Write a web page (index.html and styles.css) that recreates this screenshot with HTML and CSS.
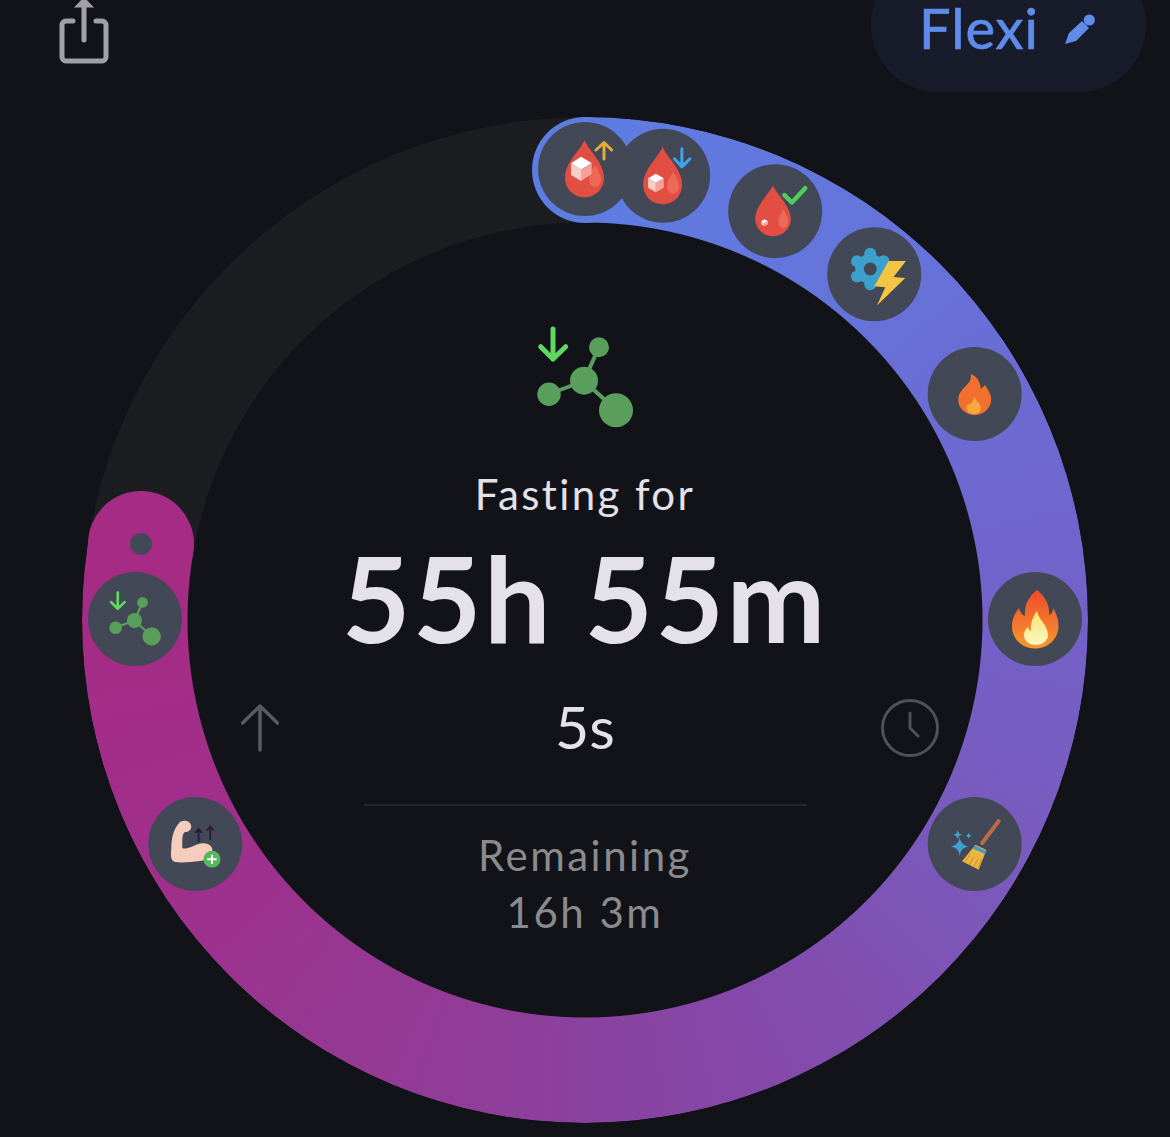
FILE: index.html
```html
<!DOCTYPE html>
<html lang="en">
<head>
    <meta charset="UTF-8">
    <meta name="viewport" content="width=device-width, initial-scale=1.0">
    <title>Fasting timer</title>
    <link rel="stylesheet" href="styles.css">
</head>
<body>
    <svg class="sprites" aria-hidden="true">
        <symbol id="molecule" viewBox="0 0 100 104">
            <path class="mol-bond" d="M81 84 L49 55 L64 21 M49 55 L14 68"/>
            <circle class="mol-node" cx="81" cy="84.3" r="17"/>
            <circle class="mol-node" cx="49" cy="54.7" r="14"/>
            <circle class="mol-node" cx="64" cy="21.3" r="10"/>
            <circle class="mol-node" cx="14" cy="68.3" r="11.7"/>
            <path class="mol-arrow" d="M18 3 V33 M5.7 20.7 L18 33 L30.7 20.7"/>
        </symbol>
        <symbol id="drop" viewBox="0 0 94 94">
            <path class="drop-body" d="M46.5 18 C50 28 66 40 66 56 A19.5 19.5 0 0 1 27 56 C27 40 43 28 46.5 18Z"/>
            <path class="drop-shine" d="M57 43 C59 47 63 52 63 57 C63 62 60 65 57 65 C54 65 51 62 51 57 C51 52 55 47 57 43Z"/>
        </symbol>
    </svg>

    <header class="topbar">
        <button class="share" aria-label="Share">
            <svg class="share-icon" viewBox="0 0 52 64">
                <path class="share-box" d="M15 21 H8 a4 4 0 0 0-4 4 V57 a4 4 0 0 0 4 4 H44 a4 4 0 0 0 4-4 V25 a4 4 0 0 0-4-4 H38"/>
                <path class="share-box" d="M26 40 V4"/>
                <path class="share-head" d="M16 7.5 L26 -3 L36 7.5Z"/>
            </svg>
        </button>
        <div class="plan">
            <span class="plan-name">Flexi</span>
            <svg class="pencil" viewBox="0 0 32 32">
                <path d="M1 30 L5 19 L18 7 L25 14 L12 27Z"/>
                <circle cx="25.3" cy="6" r="5.6"/>
            </svg>
        </div>
    </header>

    <main class="ring">
        <div class="band band-track"></div>
        <div class="band band-progress"></div>
        <div class="cap cap-start"></div>
        <div class="cap cap-end"></div>

        <div class="badge badge-a0">
            <svg viewBox="0 0 94 94">
                <use href="#drop"/>
                <path class="cube-top" d="M43 34.7 L53.7 41 L43 47.7 L33 41.3Z"/>
                <path class="cube-left" d="M33 41.3 L43 47.7 V59 L33 53Z"/>
                <path class="cube-right" d="M53.7 41 L43 47.7 V59 L53.7 52Z"/>
                <path class="stroke-amber" d="M66 21 V37 M58 28 L66 20.5 L73.7 28"/>
            </svg>
        </div>
        <div class="badge badge-a10">
            <svg viewBox="0 0 94 94">
                <use href="#drop"/>
                <path class="cube-top" d="M39.7 45 L47.7 49.5 L39.7 54 L32 49.5Z"/>
                <path class="cube-left" d="M32 49.5 L39.7 54 V63.5 L32 59Z"/>
                <path class="cube-right" d="M47.7 49.5 L39.7 54 V63.5 L47.7 59Z"/>
                <path class="stroke-blue" d="M65.7 20 V38 M58.3 30 L65.7 38 L73.7 30"/>
            </svg>
        </div>
        <div class="badge badge-a25">
            <svg viewBox="0 0 94 94">
                <path class="drop-body" d="M44.7 21 C48 30 62.7 41 62.7 55.5 A17.9 17.9 0 0 1 27 55.5 C27 41 41 30 44.7 21Z"/>
                <path class="drop-shine" d="M55 45 C57 49 60 53 60 57 C60 61 58 64 55 64 C52 64 50 61 50 57 C50 53 53 49 55 45Z"/>
                <path class="cube-top" d="M36.3 55 L39.8 57 L36.3 59 L33 57Z"/>
                <path class="cube-left" d="M33 57 L36.3 59 V62 L33 60Z"/>
                <path class="cube-right" d="M39.8 57 L36.3 59 V62 L39.8 60Z"/>
                <path class="stroke-check" d="M56.3 31 L63.7 38.3 L77 24"/>
            </svg>
        </div>
        <div class="badge badge-a40">
            <svg viewBox="0 0 94 94">
                <g class="gear">
                    <circle cx="43" cy="41.7" r="15"/>
                    <circle cx="43" cy="26.5" r="6"/>
                    <circle cx="56.2" cy="34" r="6"/>
                    <circle cx="56.2" cy="49.3" r="6"/>
                    <circle cx="43" cy="57" r="6"/>
                    <circle cx="29.8" cy="49.3" r="6"/>
                    <circle cx="29.8" cy="34" r="6"/>
                </g>
                <circle class="gear-hole" cx="43" cy="41.7" r="6.5"/>
                <path class="bolt" d="M61.3 33.7 H78.7 L66.3 49.7 L78 50.7 L49.7 78.3 L58 60 L47 59Z"/>
            </svg>
        </div>
        <div class="badge badge-a60">
            <svg viewBox="0 0 94 94">
                <path class="flame-small" d="M43 27 C49 29 53 35 53 42 C55 41 56 39 57 38 C61 43 63.5 48 63.5 52 C63.5 61 56 68 47 68 C38 68 30.5 61 30.5 53 C30.5 46 35 42 39 38 C42 35 44 32 43 27Z"/>
                <path class="flame-small-core" d="M47 50 C48 54 53 56 53 61 C53 65 50 67 46 67 C42 67 39 65 39 61 C39 58 41 56 43 57 C44 55 46 53 47 50Z"/>
            </svg>
        </div>
        <div class="badge badge-a90">
            <svg viewBox="0 0 94 94">
                <defs>
                    <linearGradient id="flameOuter" x1="0" y1="0" x2="0" y2="1">
                        <stop offset="0" stop-color="#ee4a2c"/>
                        <stop offset="1" stop-color="#f79a2e"/>
                    </linearGradient>
                    <linearGradient id="flameInner" x1="0" y1="0" x2="0" y2="1">
                        <stop offset="0" stop-color="#fbe46f"/>
                        <stop offset="1" stop-color="#fff6c4"/>
                    </linearGradient>
                </defs>
                <path fill="url(#flameOuter)" d="M49 18 C57 24 62 33 61 43 C64 42 65 39 65 36 C69 42 70.5 48 70.5 54 C70.5 67 60 76.5 47 76.5 C34 76.5 24 67 24 54 C24 46 28 40 31 36 C32 40 34 43 37 44 C36 33 41 24 49 18Z"/>
                <path fill="url(#flameInner)" d="M49 39 C50 47 60 53 60 63 C60 69 54 73 48 73 C41 73 36 69 36 63 C36 59 38 57 40 55 C41 58 42 59 43 59 C42 52 45 44 49 39Z"/>
            </svg>
        </div>
        <div class="badge badge-a120">
            <svg viewBox="0 0 94 94">
                <path class="broom-handle" d="M71 24 L54.5 46"/>
                <path class="broom-head" d="M47.7 47.7 L58.7 53 L51 72.7 L34.3 64.3Z"/>
                <path class="broom-band" d="M46 50 L58 55.5"/>
                <path class="broom-lines" d="M42 58 L37 65 M46 60 L41.5 68 M50 62 L46 70 M54 62 L50.5 71"/>
                <path class="sparkle" d="M32 40 C33 46 35 48 41 49.5 C35 51 33 53 32 59 C31 53 29 51 23 49.5 C29 48 31 46 32 40Z"/>
                <path class="sparkle" d="M30 33 C30.6 36 31.6 37 34.8 37.7 C31.6 38.4 30.6 39.5 30 42.5 C29.4 39.5 28.4 38.4 25.2 37.7 C28.4 37 29.4 36 30 33Z"/>
                <path class="sparkle" d="M41 35.5 C41.4 37.5 42 38 44 38.7 C42 39.4 41.4 40 41 42 C40.6 40 40 39.4 38 38.7 C40 38 40.6 37.5 41 35.5Z"/>
            </svg>
        </div>
        <div class="badge badge-a240">
            <svg viewBox="0 0 94 94">
                <path class="arm" d="M30 27 C33 22 42 23 43 29 C43 33 40 35 37 35 C34 36 34 40 34 51 C38 53 44 49 50 47 C56 45 63 47 64 52 C65 60 60 63 52 64 C42 65 34 66 27 65 C23 64 22 60 23 52 C23 42 25 33 30 27Z"/>
                <path class="gain-arrow" d="M50.3 45 V32 M47 36 L50.3 32 L53.6 36 M62 43 V29.5 M58.7 33.5 L62 29.5 L65.3 33.5"/>
                <circle class="plus-dot" cx="63.7" cy="62.3" r="8.5"/>
                <path class="plus-mark" d="M63.7 57.7 V67 M59 62.3 H68.4"/>
            </svg>
        </div>
        <div class="badge badge-a270">
            <svg class="badge-molecule"><use href="#molecule"/></svg>
        </div>
        <div class="end-dot"></div>

        <svg class="hint hint-arrow" viewBox="0 0 38 48">
            <path d="M19 2 V46 M1.5 19 L19 2 L36.5 19"/>
        </svg>
        <svg class="hint hint-clock" viewBox="0 0 58 58">
            <circle cx="29" cy="29" r="27.5"/>
            <path d="M29 14 V29 L37 37"/>
        </svg>

        <section class="readout">
            <svg class="stage-icon"><use href="#molecule"/></svg>
            <p class="label">Fasting for</p>
            <p class="elapsed">55h 55m</p>
            <p class="seconds">5s</p>
            <hr class="rule">
            <p class="remaining">Remaining</p>
            <p class="remaining remaining-time">16h 3m</p>
        </section>
    </main>
</body>
</html>
```

FILE: styles.css
```css
:root {
    --bg: #111319;
    --badge: #434856;
    --blue: #5e7de3;
    --pink: #a62b85;
}
* {
    box-sizing: border-box;
}
body {
    margin: 0;
    height: 1137px;
    overflow: hidden;
    background-color: var(--bg);
    font-family: "Lato", "Noto Sans", sans-serif;
    display: flex;
    flex-direction: column;
    align-items: flex-start;
}
p {
    margin: 0;
}
.sprites {
    display: none;
}

/* barra de cima */
.topbar {
    width: 100%;
    height: 92px;
    padding: 0 24px 0 58px;
    display: flex;
    justify-content: space-between;
    align-items: flex-end;
}
.share {
    padding: 0;
    border: 0;
    background: none;
    align-self: flex-start;
}
.share-icon {
    display: block;
    width: 52px;
    height: 64px;
    overflow: visible;
}
.share-box {
    fill: none;
    stroke: #a1a1a5;
    stroke-width: 5;
    stroke-linecap: round;
}
.share-head {
    fill: #a1a1a5;
}
.plan {
    width: 275px;
    height: 134px;
    flex-shrink: 0;
    padding: 0 50px 39px 48px;
    border-radius: 67px;
    background-color: #181c2a;
    display: flex;
    justify-content: space-between;
    align-items: flex-end;
}
.plan-name {
    font-size: 56px;
    line-height: 50px;
    letter-spacing: 1px;
    -webkit-text-stroke: 0.7px #5f8bea;
    color: #5f8bea;
}
.pencil {
    width: 32px;
    height: 32px;
    margin-bottom: 7px;
    fill: #5f8bea;
}

/* anel */
.ring {
    position: relative;
    width: 1006px;
    height: 1006px;
    margin: 25px 0 0 82px;
    flex-shrink: 0;
    display: flex;
    justify-content: center;
}
.band {
    position: absolute;
    inset: 0;
    border-radius: 50%;
    -webkit-mask: radial-gradient(closest-side, transparent 397px, #000 398px);
    mask: radial-gradient(closest-side, transparent 397px, #000 398px);
}
.band-track {
    background-color: #1c1d21;
}
.band-progress {
    background: conic-gradient(
        #5e7de3 0deg,
        #6672d9 45deg,
        #7164cc 80deg,
        #7a5abd 120deg,
        #8548a8 160deg,
        #923b96 200deg,
        #a02f8b 240deg,
        #a62b85 279.65deg,
        transparent 279.65deg
    );
}
.cap {
    position: absolute;
    width: 106px;
    height: 106px;
    border-radius: 50%;
}
.cap-start {
    left: 450px;
    top: 0;
    background-color: var(--blue);
}
.cap-end {
    left: 6px;
    top: 374px;
    background-color: var(--pink);
}
.end-dot {
    position: absolute;
    left: 48px;
    top: 416px;
    width: 22px;
    height: 22px;
    border-radius: 50%;
    background-color: var(--badge);
}
.badge {
    position: absolute;
    left: 50%;
    top: 50%;
    width: 94px;
    height: 94px;
    margin: -48px 0 0 -47px;
    border-radius: 50%;
    background-color: var(--badge);
    display: flex;
    align-items: center;
    justify-content: center;
    transform: rotate(var(--a)) translateY(-450px) rotate(calc(-1 * var(--a)));
}
.badge svg {
    width: 94px;
    height: 94px;
}
.badge .badge-molecule {
    width: 54px;
    height: 56px;
}
.badge-a0 { --a: 0deg; }
.badge-a10 { --a: 10deg; }
.badge-a25 { --a: 25deg; }
.badge-a40 { --a: 40deg; }
.badge-a60 { --a: 60deg; }
.badge-a90 { --a: 90deg; }
.badge-a120 { --a: 120deg; }
.badge-a240 { --a: 240deg; }
.badge-a270 { --a: 270deg; }

/* icones */
.mol-bond {
    fill: none;
    stroke: #5a9e5b;
    stroke-width: 4;
}
.mol-node {
    fill: #5a9e5b;
}
.mol-arrow {
    fill: none;
    stroke: #5fd85f;
    stroke-width: 5;
    stroke-linecap: round;
    stroke-linejoin: round;
}
.drop-body { fill: #e34e43; }
.drop-shine { fill: #ec6a55; }
.cube-top { fill: #fff; }
.cube-left { fill: #f7cdc7; }
.cube-right { fill: #f2a298; }
.stroke-amber,
.stroke-blue,
.stroke-check {
    fill: none;
    stroke-width: 3;
    stroke-linecap: round;
    stroke-linejoin: round;
}
.stroke-amber { stroke: #e3ad3c; }
.stroke-blue { stroke: #3fa5ea; }
.stroke-check {
    stroke: #4fcf5a;
    stroke-width: 4.5;
}
.gear { fill: #3da0cc; }
.gear-hole { fill: var(--badge); }
.bolt { fill: #f4c542; }
.flame-small { fill: #f2702e; }
.flame-small-core { fill: #f8a83f; }
.broom-handle {
    fill: none;
    stroke: #c0694a;
    stroke-width: 4;
    stroke-linecap: round;
}
.broom-head { fill: #edb53e; }
.broom-band {
    fill: none;
    stroke: #3d9dd1;
    stroke-width: 3.5;
}
.broom-lines {
    fill: none;
    stroke: #c9922e;
    stroke-width: 1;
}
.sparkle { fill: #3da0d3; }
.arm { fill: #f6cdbd; }
.gain-arrow {
    fill: none;
    stroke: #2a1a3a;
    stroke-width: 1.8;
}
.plus-dot { fill: #57b75c; }
.plus-mark {
    fill: none;
    stroke: #fff;
    stroke-width: 2;
}
.hint {
    position: absolute;
    fill: none;
    stroke-linecap: round;
    stroke-linejoin: round;
}
.hint-arrow {
    left: 159px;
    top: 587px;
    width: 38px;
    height: 48px;
    stroke: #5a5a5e;
    stroke-width: 3.5;
}
.hint-clock {
    left: 799px;
    top: 582px;
    width: 58px;
    height: 58px;
    stroke: #505154;
    stroke-width: 3;
}

/* texto do centro */
.readout {
    position: relative;
    width: 520px;
    padding-top: 209px;
    display: flex;
    flex-direction: column;
    align-items: center;
    text-align: center;
    white-space: nowrap;
}
.stage-icon {
    width: 100px;
    height: 104px;
}
.label {
    margin-top: 39px;
    font-size: 42px;
    line-height: 50px;
    letter-spacing: 2.4px;
    color: #e4e1e8;
}
.elapsed {
    margin-top: 14px;
    font-size: 118px;
    line-height: 130px;
    font-weight: 700;
    letter-spacing: 2.6px;
    color: #e4e1e8;
}
.seconds {
    margin-top: 34px;
    font-size: 59px;
    line-height: 60px;
    color: #e4e1e8;
}
.rule {
    width: 443px;
    height: 2px;
    margin: 47px 0 0;
    border: 0;
    background-color: #25262b;
}
.remaining {
    margin-top: 23px;
    font-size: 42px;
    line-height: 52px;
    letter-spacing: 2.5px;
    color: #8b8b8e;
}
.remaining-time {
    margin-top: 5px;
}
```
